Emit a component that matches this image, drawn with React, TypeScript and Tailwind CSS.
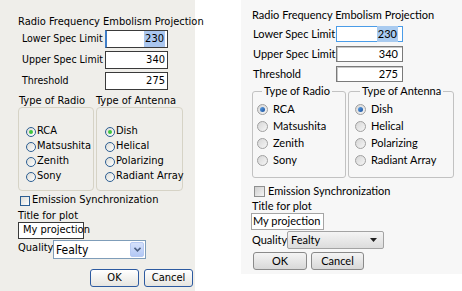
import React from 'react';

const xpFont = "font-['Liberation_Sans_Narrow','DejaVu_Sans_Condensed',sans-serif]";
const w7Font = "font-['Lato','Noto_Sans',sans-serif]";

function XpRadio({ label, checked }: { label: string; checked?: boolean }) {
  return (
    <div className="flex h-[15px] items-center gap-[1px] whitespace-nowrap">
      <span className="flex h-[10px] w-[10px] shrink-0 items-center justify-center rounded-full border border-[#2c5e93] bg-gradient-to-br from-[#dcdcd6] to-white">
        {checked && <span className="h-[4px] w-[4px] rounded-full bg-[#3ec53e]" />}
      </span>
      <span>{label}</span>
    </div>
  );
}

function W7Radio({ label, checked }: { label: string; checked?: boolean }) {
  return (
    <div className="flex h-[17px] items-center gap-[5px] whitespace-nowrap">
      <span className="flex h-[11px] w-[11px] shrink-0 items-center justify-center rounded-full border border-[#a0a0a0] bg-gradient-to-br from-[#d6d6d6] to-[#f6f6f6]">
        {checked && <span className="h-[5px] w-[5px] rounded-full bg-gradient-to-br from-[#5fa3e6] to-[#1b4f9c]" />}
      </span>
      <span>{label}</span>
    </div>
  );
}

function XpDialog() {
  const rows = [
    { label: 'Lower Spec Limit', value: '230', focus: true },
    { label: 'Upper Spec Limit', value: '340' },
    { label: 'Threshold', value: '275' },
  ];
  return (
    <div className={`flex h-[291px] w-[195px] shrink-0 flex-col whitespace-nowrap bg-[#efeeea] pl-[18px] pt-[15px] text-[11px] text-black ${xpFont}`}>
      <div className="h-[13px] leading-[13px]">Radio Frequency Embolism Projection</div>

      <div className="mt-[2px] flex flex-col gap-[3px]">
        {rows.map((r) => (
          <div key={r.label} className="flex h-[18px] items-center">
            <span className="w-[87px] pl-[4px] text-[10.5px]">{r.label}</span>
            <div
              className={`flex h-[18px] w-[63px] items-center justify-end bg-white pr-[2px] border border-[#3a3a3a] ${
                r.focus ? 'border-l-[#3d7dc8] border-l-2' : ''
              }`}
            >
              <span className={r.focus ? 'bg-[#aac6ee] px-[1px]' : ''}>{r.value}</span>
            </div>
          </div>
        ))}
      </div>

      <div className="mt-[4px] flex gap-[2px]">
        <div className="flex w-[76px] flex-col">
          <div className="h-[13px] pl-[1px] leading-[13px]">Type of Radio</div>
          <div className="flex h-[84px] flex-col rounded-[4px] border border-[#d6d3c6] pl-[7px] pt-[16px]">
            <XpRadio label="RCA" checked />
            <XpRadio label="Matsushita" />
            <XpRadio label="Zenith" />
            <XpRadio label="Sony" />
          </div>
        </div>
        <div className="flex w-[87px] flex-col">
          <div className="h-[13px] leading-[13px]">Type of Antenna</div>
          <div className="flex h-[84px] flex-col rounded-[4px] border border-[#d6d3c6] pl-[8px] pt-[16px]">
            <XpRadio label="Dish" checked />
            <XpRadio label="Helical" />
            <XpRadio label="Polarizing" />
            <XpRadio label="Radiant Array" />
          </div>
        </div>
      </div>

      <div className="mt-[3px] flex h-[13px] items-center gap-[2px] pl-[2px]">
        <span className="h-[10px] w-[10px] border border-[#2c5e93] bg-gradient-to-br from-[#dcdcd6] to-white" />
        <span>Emission Synchronization</span>
      </div>

      <div className="mt-[3px] h-[12px] leading-[12px]">Title for plot</div>
      <div className="flex h-[17px] w-[66px] items-center border border-[#3a3a3a] bg-white pl-[4px]">
        My projection
      </div>

      <div className="mt-[1px] flex items-start">
        <span className="w-[35px] pt-[2px] leading-[12px]">Quality</span>
        <div className="flex h-[19px] w-[93px] items-center justify-between border border-[#7f9db9] bg-white pl-[2px] pr-[1px]">
          <span className="text-[12px]">Fealty</span>
          <span className="flex h-[15px] w-[14px] items-center justify-center rounded-[2px] border border-[#b6c9f2] bg-gradient-to-b from-[#d5e1fb] to-[#b3c8f5]">
            <svg width="7" height="5" viewBox="0 0 7 5">
              <path d="M0.5 0.8 L3.5 3.8 L6.5 0.8" fill="none" stroke="#4d6185" strokeWidth="1.6" />
            </svg>
          </span>
        </div>
      </div>

      <div className="mt-[10px] flex justify-end gap-[5px] pr-[2px]">
        <button className="flex h-[18px] w-[49px] items-center justify-center rounded-[3px] border border-[#2d5aa0] bg-gradient-to-b from-white to-[#e6e5e0]">
          OK
        </button>
        <button className="flex h-[18px] w-[49px] items-center justify-center rounded-[3px] border border-[#2d5aa0] bg-gradient-to-b from-white to-[#e6e5e0]">
          Cancel
        </button>
      </div>
    </div>
  );
}

function W7Dialog() {
  const rows = [
    { label: 'Lower Spec Limit', value: '230', focus: true },
    { label: 'Upper Spec Limit', value: '340' },
    { label: 'Threshold', value: '275' },
  ];
  return (
    <div className={`flex h-[274px] w-[221px] shrink-0 flex-col whitespace-nowrap bg-[#f7f7f7] pl-[11px] pt-[8px] text-[11px] text-black ${w7Font}`}>
      <div className="h-[14px] leading-[14px]">Radio Frequency Embolism Projection</div>

      <div className="mt-[4px] flex flex-col gap-[4px]">
        {rows.map((r) => (
          <div key={r.label} className="flex h-[16px] items-center">
            <span className="w-[84px] pl-[1px]">{r.label}</span>
            <div
              className={`flex h-[16px] w-[67px] items-center justify-end bg-white pr-[4px] border ${
                r.focus ? 'border-[#4a9ce8]' : 'border-[#7a7a7a] shadow-[inset_1px_1px_0_#c8c8c8]'
              }`}
            >
              <span className={r.focus ? 'bg-[#a9cbf0] px-[1px]' : ''}>{r.value}</span>
            </div>
          </div>
        ))}
      </div>

      <div className="mt-[2px] flex gap-[2px]">
        <fieldset className="h-[94px] w-[94px] rounded-[3px] border border-[#c2c2c2] pl-[4px] pt-[3px]">
          <legend className="ml-[5px] px-[2px] leading-[14px]">Type of Radio</legend>
          <W7Radio label="RCA" checked />
          <W7Radio label="Matsushita" />
          <W7Radio label="Zenith" />
          <W7Radio label="Sony" />
        </fieldset>
        <fieldset className="h-[94px] w-[106px] rounded-[3px] border border-[#c2c2c2] pl-[6px] pt-[3px]">
          <legend className="ml-[5px] px-[2px] leading-[14px]">Type of Antenna</legend>
          <W7Radio label="Dish" checked />
          <W7Radio label="Helical" />
          <W7Radio label="Polarizing" />
          <W7Radio label="Radiant Array" />
        </fieldset>
      </div>

      <div className="mt-[6px] flex h-[14px] items-center gap-[3px] pl-[2px]">
        <span className="h-[11px] w-[11px] border border-[#8e8f8f] bg-gradient-to-br from-[#cfcfcf] to-[#f4f4f4]" />
        <span>Emission Synchronization</span>
      </div>

      <div className="mt-[1px] h-[14px] leading-[14px]">Title for plot</div>
      <div className="-ml-[1px] flex h-[17px] w-[73px] items-center border border-[#a5a5a5] bg-white pl-[1px]">
        My projection
      </div>

      <div className="mt-[1px] flex items-center">
        <span className="w-[35px]">Quality</span>
        <div className="flex h-[18px] w-[97px] items-center justify-between rounded-[2px] border border-[#a3a3a3] bg-gradient-to-b from-[#f4f4f4] to-[#dcdcdc] pl-[3px] pr-[6px]">
          <span>Fealty</span>
          <svg width="7" height="4" viewBox="0 0 7 4">
            <path d="M0 0 L7 0 L3.5 4 Z" fill="#202020" />
          </svg>
        </div>
      </div>

      <div className="mt-[3px] flex gap-[4px] pl-[1px]">
        <button className="flex h-[18px] w-[54px] items-center justify-center rounded-[3px] border border-[#8a8a8a] bg-gradient-to-b from-[#f4f4f4] to-[#d8d8d8]">
          OK
        </button>
        <button className="flex h-[18px] w-[53px] items-center justify-center rounded-[3px] border border-[#8a8a8a] bg-gradient-to-b from-[#f4f4f4] to-[#d8d8d8]">
          Cancel
        </button>
      </div>
    </div>
  );
}

export default function App() {
  return (
    <div className="flex h-[291px] w-[462px] gap-[46px] overflow-hidden bg-white">
      <XpDialog />
      <W7Dialog />
    </div>
  );
}
